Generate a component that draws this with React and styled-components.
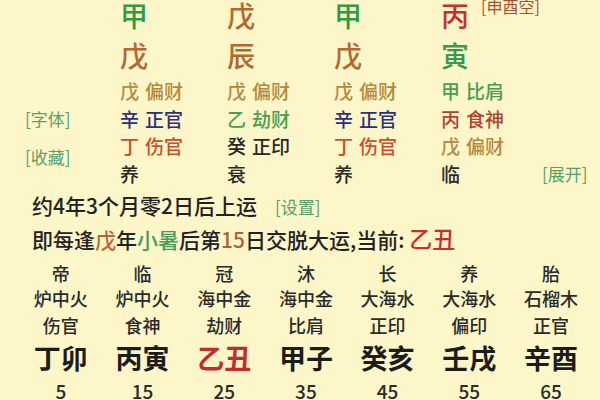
import React from "react";
import styled, { createGlobalStyle } from "styled-components";

const GlobalStyle = createGlobalStyle`
  html, body {
    margin: 0;
    padding: 0;
    background: #fcf6c9;
  }
  body {
    width: 600px;
    height: 400px;
    overflow: hidden;
    font-family: "Noto Sans CJK SC", "Noto Sans", sans-serif;
    font-weight: 500;
    color: #222;
  }
`;

const COLORS = {
  green: "#2f9a48",
  brown: "#b4672e",
  red: "#c4302c",
  ochre: "#b3893f",
  navy: "#2c2f7c",
  orange: "#c8502e",
  leaf: "#4a9e52",
  rust: "#b04430",
  ink: "#262626",
  link: "#5aa06a",
};

const pillars = [
  {
    stem: ["甲", COLORS.green],
    branch: ["戊", COLORS.brown],
    hidden: [
      ["戊", "偏财", COLORS.ochre],
      ["辛", "正官", COLORS.navy],
      ["丁", "伤官", COLORS.orange],
    ],
    stage: "养",
    width: 107,
  },
  {
    stem: ["戊", COLORS.brown],
    branch: ["辰", COLORS.brown],
    hidden: [
      ["戊", "偏财", COLORS.ochre],
      ["乙", "劫财", COLORS.leaf],
      ["癸", "正印", COLORS.ink],
    ],
    stage: "衰",
    width: 107,
  },
  {
    stem: ["甲", COLORS.green],
    branch: ["戊", COLORS.brown],
    hidden: [
      ["戊", "偏财", COLORS.ochre],
      ["辛", "正官", COLORS.navy],
      ["丁", "伤官", COLORS.orange],
    ],
    stage: "养",
    width: 107,
  },
  {
    stem: ["丙", COLORS.red],
    branch: ["寅", "#3a9a45"],
    hidden: [
      ["甲", "比肩", COLORS.leaf],
      ["丙", "食神", COLORS.rust],
      ["戊", "偏财", COLORS.ochre],
    ],
    stage: "临",
    width: 101,
    note: "[申酉空]",
  },
];

const dayun = [
  ["帝", "炉中火", "伤官", "丁卯", "5"],
  ["临", "炉中火", "食神", "丙寅", "15"],
  ["冠", "海中金", "劫财", "乙丑", "25", true],
  ["沐", "海中金", "比肩", "甲子", "35"],
  ["长", "大海水", "正印", "癸亥", "45"],
  ["养", "大海水", "偏印", "壬戌", "55"],
  ["胎", "石榴木", "正官", "辛酉", "65"],
];

const Page = styled.div`
  width: 600px;
  height: 400px;
  display: flex;
  flex-direction: column;
`;

const Chart = styled.div`
  display: flex;
  height: 187px;
`;

const SidePanel = styled.div`
  width: 120px;
  display: flex;
  flex-direction: column;
  gap: 18px;
  padding: 109px 0 0 25px;
  box-sizing: border-box;
`;

const LinkText = styled.span`
  font-size: 17px;
  line-height: 20px;
  height: 20px;
  font-weight: 400;
  color: ${COLORS.link};
  white-space: nowrap;
`;

const RightPanel = styled.div`
  flex: 1;
  display: flex;
  flex-direction: column;
  justify-content: flex-end;
  padding-bottom: 3px;
`;

const Pillar = styled.div`
  width: ${(p) => p.$width}px;
  display: flex;
  flex-direction: column;
`;

const StemCell = styled.div`
  display: flex;
  align-items: flex-start;
  gap: 12px;
  height: 28px;
  padding-top: 1px;
`;

const BigChar = styled.span`
  font-size: 28px;
  line-height: 28px;
  color: ${(p) => p.$color};
`;

const BranchCell = styled.div`
  height: 28px;
  margin-top: 12px;
  margin-bottom: 8px;
`;

const Note = styled.span`
  font-size: 16px;
  line-height: 16px;
  margin-top: -3px;
  font-weight: 400;
  color: #a3522e;
  white-space: nowrap;
`;

const HiddenRow = styled.div`
  display: flex;
  gap: 6px;
  height: 27.5px;
  line-height: 27.5px;
  font-size: 19px;
  color: ${(p) => p.$color};
`;

const InfoLine = styled.div`
  padding-left: 32px;
  height: ${(p) => p.$height}px;
  line-height: ${(p) => p.$height}px;
  font-size: 21px;
  color: #222;
  white-space: nowrap;
`;

const Colored = styled.span`
  color: ${(p) => p.$color};
  font-size: ${(p) => (p.$size ? `${p.$size}px` : "inherit")};
`;

const SettingLink = styled.span`
  margin-left: 18px;
  font-size: 17px;
  font-weight: 400;
  color: ${COLORS.link};
`;

const DayunTable = styled.div`
  display: grid;
  grid-template-columns: repeat(7, 81.7px);
  margin: 4px 0 0 20px;
`;

const DayunColumn = styled.div`
  display: flex;
  flex-direction: column;
  align-items: center;
  color: #2a2a2a;
`;

const SmallCell = styled.div`
  height: ${(p) => p.$height}px;
  line-height: ${(p) => p.$height}px;
  font-size: 18px;
  white-space: nowrap;
`;

const GanzhiCell = styled.div`
  height: 36px;
  line-height: 36px;
  font-size: 27px;
  font-weight: 700;
  color: ${(p) => (p.$current ? "#c42b2b" : "#1c1c1c")};
  white-space: nowrap;
`;

const AgeCell = styled.div`
  height: 30px;
  line-height: 30px;
  font-size: 19px;
  color: #2a2a2a;
`;

export default function App() {
  return (
    <Page>
      <GlobalStyle />
      <Chart>
        <SidePanel>
          <LinkText>[字体]</LinkText>
          <LinkText>[收藏]</LinkText>
        </SidePanel>
        {pillars.map((p, i) => (
          <Pillar key={i} $width={p.width}>
            <StemCell>
              <BigChar $color={p.stem[1]}>{p.stem[0]}</BigChar>
              {p.note && <Note>{p.note}</Note>}
            </StemCell>
            <BranchCell>
              <BigChar $color={p.branch[1]}>{p.branch[0]}</BigChar>
            </BranchCell>
            {p.hidden.map(([g, god, c], j) => (
              <HiddenRow key={j} $color={c}>
                <span>{g}</span>
                <span>{god}</span>
              </HiddenRow>
            ))}
            <HiddenRow $color="#2a2a2a">
              <span>{p.stage}</span>
            </HiddenRow>
          </Pillar>
        ))}
        <RightPanel>
          <LinkText>[展开]</LinkText>
        </RightPanel>
      </Chart>

      <InfoLine $height={30} style={{ marginTop: 3 }}>
        约4年3个月零2日后上运
        <SettingLink>[设置]</SettingLink>
      </InfoLine>
      <InfoLine $height={36}>
        即每逢<Colored $color="#c0603a">戊</Colored>年
        <Colored $color="#4a9a5a">小暑</Colored>后第
        <Colored $color="#b0603a">15</Colored>日交脱大运,当前:{" "}
        <Colored $color="#c4302c" $size={23}>
          乙丑
        </Colored>
      </InfoLine>

      <DayunTable>
        {dayun.map(([stage, nayin, god, gz, age, current], i) => (
          <DayunColumn key={i}>
            <SmallCell $height={26}>{stage}</SmallCell>
            <SmallCell $height={24}>{nayin}</SmallCell>
            <SmallCell $height={30}>{god}</SmallCell>
            <GanzhiCell $current={current}>{gz}</GanzhiCell>
            <AgeCell>{age}</AgeCell>
          </DayunColumn>
        ))}
      </DayunTable>
    </Page>
  );
}
